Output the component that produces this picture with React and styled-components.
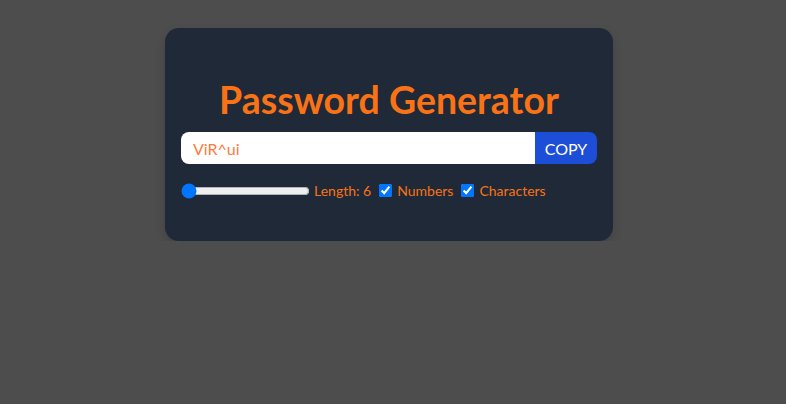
import React, { useState } from 'react';
import styled, { createGlobalStyle } from 'styled-components';

const GlobalStyle = createGlobalStyle`
  html, body {
    margin: 0;
    padding: 0;
    background-color: #4d4d4d;
    font-family: 'Lato', 'Open Sans', sans-serif;
  }
  * {
    box-sizing: border-box;
  }
`;

// Page area, a little narrower than the window like the original
const Page = styled.div`
  padding: 28px 8px 0 0;
`;

// Card holding the whole generator
const Card = styled.div`
  width: 448px;
  margin: 0 auto;
  padding: 48px 16px 42px;
  background-color: #1f2937;
  border-radius: 14px;
  box-shadow: 0 4px 10px rgba(0, 0, 0, 0.15);
  color: #f97316;
`;

const Title = styled.h1`
  margin: 0 0 8px;
  text-align: center;
  font-size: 37.5px;
  line-height: 48px;
  font-weight: 700;
  color: #f97316;
`;

const InputRow = styled.div`
  display: flex;
  height: 32px;
  border-radius: 8px;
  overflow: hidden;
  margin-bottom: 18px;
`;

const PasswordField = styled.input`
  flex: 1;
  min-width: 0;
  border: none;
  outline: none;
  margin: 0;
  padding: 4px 12px;
  font-family: inherit;
  font-size: 16px;
  color: #fb7d3c;
  background: #ffffff;
`;

const CopyButton = styled.button`
  flex-shrink: 0;
  width: 62px;
  border: none;
  margin: 0;
  padding: 0;
  background-color: #1d4ed8;
  color: #ffffff;
  font-family: inherit;
  font-size: 16px;
  cursor: pointer;
`;

const Options = styled.div`
  display: flex;
  align-items: center;
  gap: 8px;
  font-size: 14px;
`;

const Option = styled.div`
  display: flex;
  align-items: center;
  gap: 4px;
`;

const Range = styled.input`
  margin: 0;
  width: 129px;
  cursor: pointer;
`;

const Check = styled.input`
  margin: 0 1px 0 0;
`;

export default function App() {
  const [length, setLength] = useState(6);
  const [numbers, setNumbers] = useState(true);
  const [chars, setChars] = useState(true);

  return (
    <Page>
      <GlobalStyle />
      <Card>
        <Title>Password Generator</Title>
        <InputRow>
          <PasswordField type="text" value="ViR^ui" readOnly placeholder="Password" />
          <CopyButton>COPY</CopyButton>
        </InputRow>
        <Options>
          <Option>
            <Range
              type="range"
              min={6}
              max={100}
              value={length}
              onChange={(e) => setLength(Number(e.target.value))}
            />
            <label>Length: {length}</label>
          </Option>
          <Option>
            <Check type="checkbox" checked={numbers} onChange={() => setNumbers((p) => !p)} />
            <label>Numbers</label>
          </Option>
          <Option>
            <Check type="checkbox" checked={chars} onChange={() => setChars((p) => !p)} />
            <label>Characters</label>
          </Option>
        </Options>
      </Card>
    </Page>
  );
}
